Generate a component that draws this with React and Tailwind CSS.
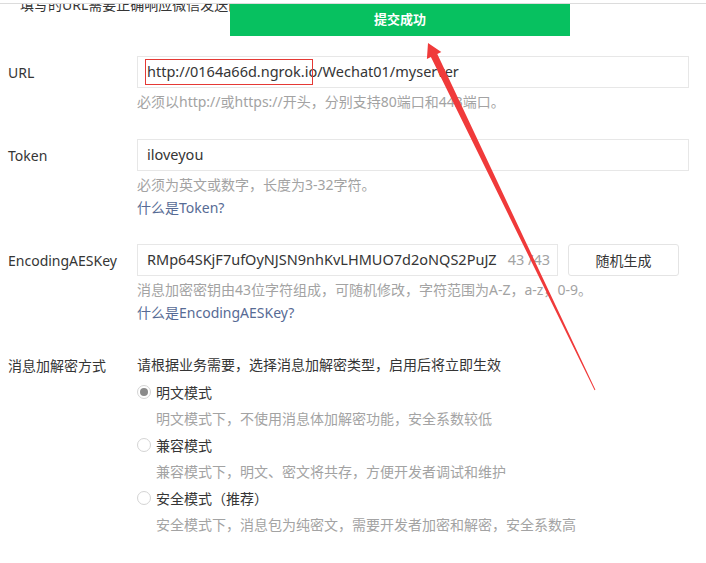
import React from "react";

const font = { fontFamily: '"Noto Sans","Noto Sans CJK SC",sans-serif' };

function Radio({ checked, label, hint }) {
  return (
    <div>
      <div className="flex items-center h-[26px]">
        <span className="w-[14px] h-[14px] rounded-full border border-[#d4d4d4] bg-white flex items-center justify-center">
          {checked && <span className="w-[8px] h-[8px] rounded-full bg-[#8a8a8a]" />}
        </span>
        <span className="ml-[5px] text-[14px] text-[#353535]">{label}</span>
      </div>
      <div className="pl-[19px] pt-[1px] h-[27px] leading-[26px] text-[14px] text-[#a3a3a3]">{hint}</div>
    </div>
  );
}

function Row({ label, children, labelTop = "h-[32px]" }) {
  return (
    <div className="flex">
      <div className={`w-[129px] shrink-0 flex items-center text-[14px] text-[#353535] ${labelTop}`}>{label}</div>
      <div className="flex-1 pr-[17px]">{children}</div>
    </div>
  );
}

export default function App() {
  return (
    <div className="relative w-[706px] h-[563px] bg-white overflow-hidden" style={font}>
      {/* scrolled header */}
      <div className="h-[3px]" />
      <div className="border-t border-[#dcdcdc]" />
      <div className="h-[10px] overflow-hidden pl-[20px]">
        <div className="-mt-[9px] text-[14px] text-[#353535] leading-[20px]">填写的URL需要正确响应微信发送的Token验证</div>
      </div>

      <div className="pl-[8px] pt-[42px]">
        <Row label="URL">
          <div className="relative h-[32px] border border-[#e7e7e7] flex items-center pl-[9px] text-[14.5px] text-[#353535]">
            http://0164a66d.ngrok.io/Wechat01/myserver
            <span className="absolute left-[7px] top-[2px] w-[168px] h-[26px] border border-[#e53935]" />
          </div>
          <div className="mt-[3px] leading-[22px] text-[14px] text-[#a3a3a3]">必须以http://或https://开头，分别支持80端口和443端口。</div>
        </Row>

        <div className="h-[26px]" />
        <Row label="Token">
          <div className="h-[32px] border border-[#e7e7e7] flex items-center pl-[9px] text-[14.5px] text-[#353535]">iloveyou</div>
          <div className="mt-[3px] leading-[22px] text-[14px] text-[#a3a3a3]">必须为英文或数字，长度为3-32字符。</div>
          <div className="leading-[23px] text-[14px] text-[#576b95]">什么是Token?</div>
        </Row>

        <div className="h-[25px]" />
        <Row label="EncodingAESKey">
          <div className="flex gap-[10px]">
            <div className="w-[421px] h-[32px] border border-[#e7e7e7] flex items-center pl-[9px] pr-[7px] text-[14.5px]">
              <span className="flex-1 overflow-hidden whitespace-nowrap text-[#353535]">RMp64SKjF7ufOyNJSN9nhKvLHMUO7d2oNQS2PuJZ</span>
              <span className="ml-[4px] text-[#a3a3a3] whitespace-nowrap">43 /43</span>
            </div>
            <button className="w-[111px] h-[32px] border border-[#e4e4e4] rounded-[3px] bg-white text-[14px] text-[#353535]">随机生成</button>
          </div>
          <div className="mt-[3px] leading-[22px] text-[14px] text-[#a3a3a3]">消息加密密钥由43位字符组成，可随机修改，字符范围为A-Z，a-z，0-9。</div>
          <div className="leading-[23px] text-[14px] text-[#576b95]">什么是EncodingAESKey?</div>
        </Row>

        <div className="h-[30px]" />
        <Row label="消息加解密方式" labelTop="h-[22px]">
          <div className="leading-[22px] text-[14px] text-[#353535]">请根据业务需要，选择消息加解密类型，启用后将立即生效</div>
          <div className="mt-[3px]">
            <Radio checked label="明文模式" hint="明文模式下，不使用消息体加解密功能，安全系数较低" />
            <Radio label="兼容模式" hint="兼容模式下，明文、密文将共存，方便开发者调试和维护" />
            <Radio label="安全模式（推荐）" hint="安全模式下，消息包为纯密文，需要开发者加密和解密，安全系数高" />
          </div>
        </Row>
      </div>

      {/* toast */}
      <div className="absolute left-[230px] top-[4px] w-[340px] h-[32px] bg-[#07c160] flex items-center justify-center text-white text-[13px] font-bold">
        提交成功
      </div>

      {/* annotation arrow */}
      <svg className="absolute left-0 top-0 pointer-events-none" width="706" height="563">
        <polygon
          fill="#f03a3a"
          points="428,43 441.3,52.1 437.3,54.1 595.4,389.8 594.6,390.2 430.9,57.1 426.9,59.1"
        />
      </svg>
    </div>
  );
}
